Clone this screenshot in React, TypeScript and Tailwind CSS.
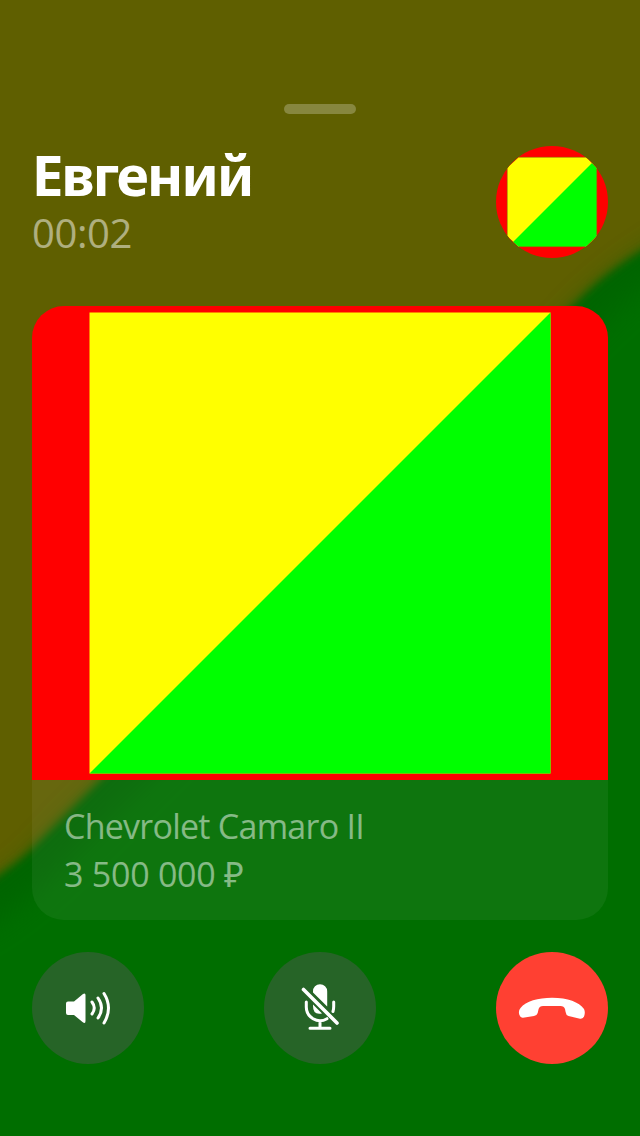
function Picture({ className }: { className: string }) {
  return (
    <svg viewBox="0 0 576 474" className={className} preserveAspectRatio="xMidYMid slice">
      <defs>
        <filter id="photo" x="-5%" y="-5%" width="110%" height="110%"><feGaussianBlur stdDeviation=".6" /></filter>
      </defs>
      <rect width="576" height="474" fill="#ff0000" />
      <g filter="url(#photo)">
        <rect x="57.5" y="6.5" width="461" height="461" fill="#ffff00" />
        <path d="M518.5 6.5V467.5H57.5Z" fill="#00ff00" />
      </g>
    </svg>
  );
}

function Avatar() {
  return (
    <svg viewBox="0 0 112 112" className="size-28 shrink-0">
      <defs>
        <clipPath id="avatar"><circle cx="56" cy="56" r="56" /></clipPath>
      </defs>
      <g clipPath="url(#avatar)">
        <rect width="112" height="112" fill="#ff0000" />
        <path d="M23 11H90L101 22V90L90 101H23L11 90V22Z" fill="#ffff00" />
        <path d="M96 17L101 22V90L90 101H23L17 96Z" fill="#00ff00" />
        <path d="M23 11.3H90M11.3 22V90M23 100.7H90M100.7 22V90" stroke="#a06000" strokeOpacity=".7" />
      </g>
    </svg>
  );
}

function Backdrop() {
  return (
    <svg viewBox="0 0 640 1136" className="absolute inset-0 size-full">
      <defs>
        <filter id="soft" x="-20%" y="-20%" width="140%" height="140%"><feGaussianBlur stdDeviation="14" /></filter>
        <filter id="edge" x="-20%" y="-20%" width="140%" height="140%"><feGaussianBlur stdDeviation="4.5" /></filter>
      </defs>
      <rect width="640" height="1136" fill="#5f5f00" />
      <path d="M-60 913Q10 885 55 832L570 315Q615 264 700 220V1200H-60Z" fill="#006400" fillOpacity=".55" filter="url(#soft)" />
      <path d="M-60 905Q0 884 45 836L580 299Q625 253 700 221V1200H-60Z" fill="#006500" filter="url(#edge)" />
      <path d="M-60 950Q0 930 75 855L600 325Q640 285 700 250V1200H-60Z" fill="#006e00" filter="url(#soft)" />
    </svg>
  );
}

export default function App() {
  return (
    <main className="relative h-[1136px] w-[640px] overflow-hidden bg-[#5f5f00] font-['Open_Sans','Noto_Sans',sans-serif]">
      <Backdrop />
      <div className="relative flex h-full flex-col px-8 pt-[104px]">
        <div className="h-[10px] w-[72px] shrink-0 self-center rounded-full bg-[#87873f]" />
        <header className="mt-7 flex h-[116px] shrink-0 items-end justify-between">
          <div className="flex h-full flex-col whitespace-nowrap">
            <h1 className="h-[67px] font-['Noto_Sans',sans-serif] text-[56px] leading-[64px] font-bold tracking-[-2.2px] text-white">Евгений</h1>
            <p className="h-12 text-[40px] leading-[48px] tracking-[-0.4px] text-white/50">00:02</p>
          </div>
          <Avatar />
        </header>
        <section className="mt-12 flex h-[614px] shrink-0 flex-col overflow-hidden rounded-[32px]">
          <Picture className="h-[474px] w-full shrink-0" />
          <div className="flex grow flex-col bg-white/[0.055] px-8 pt-[22px] text-[34px] leading-[48px] whitespace-nowrap text-white/50">
            <p className="tracking-[-0.75px]">Chevrolet Camaro II</p>
            <p className="tracking-[-0.25px]">3 500 000 ₽</p>
          </div>
        </section>
        <nav className="mt-8 flex shrink-0 justify-between">
          <button aria-label="Speaker" className="size-28 rounded-full bg-[#266427]">
            <svg viewBox="0 0 112 112" className="size-28" fill="none">
              <path d="M36 49.5H42L51 42Q53.5 40.5 53.5 43V69Q53.5 72.5 50.5 70L42 63H36Q34 63 34 61V51.5Q34 49.5 36 49.5Z" fill="white" />
              <path d="M60 50Q64.5 56 60 62M66 46Q73 56 66 66M72 41.5Q81 56 72 71" stroke="white" strokeWidth="3" strokeLinecap="round" />
            </svg>
          </button>
          <button aria-label="Mute" className="size-28 rounded-full bg-[#266427]">
            <svg viewBox="0 0 112 112" className="size-28" fill="none">
              <path d="M56 32.2A7.2 7.2 0 0 1 63.2 39.4V54.5L49 40.5V39.4A7 7 0 0 1 56 32.2Z" fill="white" />
              <path d="M49 52.5L58 61.5Q49 63.5 49 54Z" fill="white" />
              <path d="M42.3 50V54.5A13.7 13.7 0 0 0 63 66.7M69.7 50V54.5Q69.7 57 69 59.5M56 69V76M46 76.3H66" stroke="white" strokeWidth="3" strokeLinecap="round" />
              <path d="M39.5 37.5L73 71" stroke="white" strokeWidth="3.6" strokeLinecap="round" />
            </svg>
          </button>
          <button aria-label="Hang up" className="size-28 rounded-full bg-[#ff4032]">
            <svg viewBox="0 0 112 112" className="size-28">
              <path d="M56 45.7C72 45.7 83 50 88 57Q89.5 60 88.2 64Q87 67.3 84 66.7L72.5 64Q70 63.3 69.6 60L69 57Q68 54 64.5 54H47Q43.5 54 42.6 57L41.7 61Q41 63.5 38 64L27 65.8Q24.5 66 23.4 63Q22 59 24.5 56C30 49 42 45.7 56 45.7Z" fill="white" />
            </svg>
          </button>
        </nav>
      </div>
    </main>
  );
}
